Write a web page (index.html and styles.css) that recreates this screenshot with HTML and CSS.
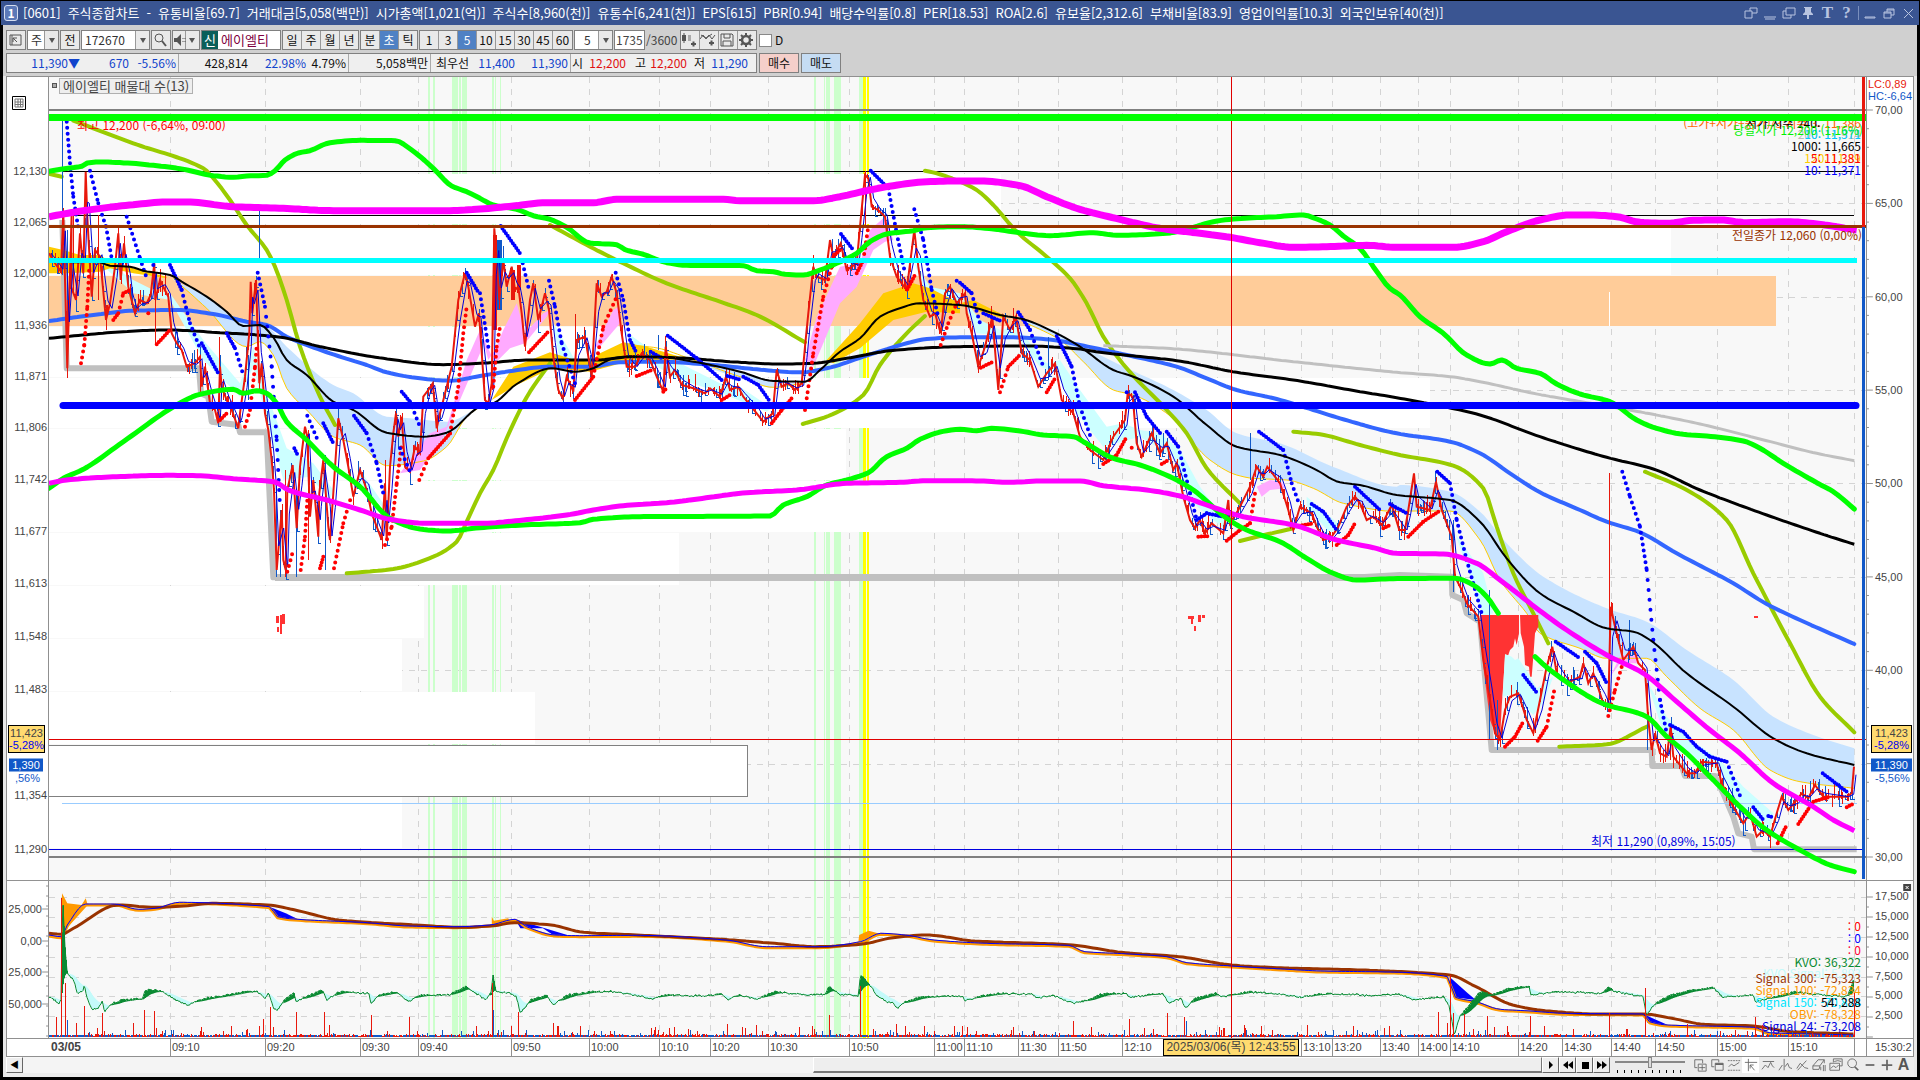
FILE: index.html
```html
<!DOCTYPE html>
<html lang="ko">
<head>
<meta charset="utf-8">
<title>[0601] 주식종합차트</title>
<link rel="stylesheet" href="styles.css">
</head>
<body>
<header class="titlebar">
  <span class="badge">1</span>
  <h1 class="metrics"><span>[0601]</span><span>주식종합차트</span><span>-</span><span>유통비율[69.7]</span><span>거래대금[5,058(백만)]</span><span>시가총액[1,021(억)]</span><span>주식수[8,960(천)]</span><span>유통수[6,241(천)]</span><span>EPS[615]</span><span>PBR[0.94]</span><span>배당수익률[0.8]</span><span>PER[18.53]</span><span>ROA[2.6]</span><span>유보율[2,312.6]</span><span>부채비율[83.9]</span><span>영업이익률[10.3]</span><span>외국인보유[40(천)]</span></h1>
  <div class="wintools">
    <button aria-label="창 분리"><svg viewBox="0 0 14 14"><path d="M1 5h7v7H1zM6 5V2h7v5H8"/></svg></button>
    <button aria-label="숨기기"><svg viewBox="0 0 14 14"><path d="M1 11h12M2 13h10"/></svg></button>
    <button aria-label="복제"><svg viewBox="0 0 14 14"><path d="M4 2h9v7H4zM4 5H1v7h8V9"/></svg></button>
    <button aria-label="고정"><svg viewBox="0 0 14 14"><path class="f" d="M3 1h8v1h-1v4l2 2v1H8v4H6V9H2V8l2-2V2H3z"/></svg></button>
    <button aria-label="글꼴" class="serif">T</button>
    <button aria-label="도움말" class="serif">?</button>
    <i class="bar"></i>
    <button aria-label="최소화"><svg viewBox="0 0 14 14"><path d="M2 11h10v1H2z"/></svg></button>
    <button aria-label="이전 크기"><svg viewBox="0 0 14 14"><path d="M2 6h7v6H2zM5 6V3h7v6H9M2 7h7M5 4h7"/></svg></button>
    <button aria-label="닫기"><svg viewBox="0 0 14 14"><path d="M3 3l9 9M12 3l-9 9"/></svg></button>
  </div>
</header>
<main class="window">
  <section class="tools">
    <div class="row">
      <div class="group"><button aria-label="패널"><svg viewBox="0 0 16 16"><path d="M3 3h11v10H3zM5 3v10M10 6H6v4M10 10L6 6"/></svg></button></div>
      <div class="drop w31"><select aria-label="종목 구분"><option>주</option></select></div>
      <div class="group"><button>전</button></div>
      <div class="drop w67"><input type="text" aria-label="종목코드" value="172670"></div>
      <div class="group"><button aria-label="검색"><svg viewBox="0 0 16 16"><circle cx="7" cy="6" r="4"/><path d="M10 9l4 5" stroke-width="2"/></svg></button></div>
      <div class="group"><button aria-label="소리" class="w14"><svg viewBox="0 0 16 16"><path class="f" d="M1 6h3l4-4v12l-4-4H1z"/><path d="M10 6v4M12 6v4" stroke-dasharray="1 2"/></svg></button><button aria-label="소리 메뉴" class="w14 arrow"></button></div>
      <div class="stock"><b>신</b><span>에이엘티</span></div>
      <div class="group"><button>일</button><button>주</button><button>월</button><button>년</button></div>
      <div class="group"><button>분</button><button class="on">초</button><button>틱</button></div>
      <div class="group num"><button>1</button><button>3</button><button class="on">5</button><button>10</button><button>15</button><button>30</button><button>45</button><button>60</button></div>
      <div class="drop w39"><input type="text" class="mid" aria-label="주기" value="5"></div>
      <div class="count"><input type="text" aria-label="표시 개수" value="1735"><span>/3600</span></div>
      <div class="group icons">
        <button aria-label="차트 유형"><svg viewBox="0 0 16 16"><path class="f" d="M1 3h4v6H1zM3 1v10M10 11h5v2h-5zM11.500 9.500h2v5h-2z"/><path d="M3 1v10"/><path class="g" d="M7 3h3v6H7z"/></svg></button>
        <button aria-label="지표 추가"><svg viewBox="0 0 16 16"><path d="M0 7l3-4 3 4 3-4 3 4 3-4M1 3l5 3 6-4"/><path class="f" d="M9 10h5v2H9zM10.500 8.500h2v5h-2z"/></svg></button>
        <button aria-label="저장"><svg viewBox="0 0 16 16"><path d="M2 2h11l1 1v11H2zM5 2v4h6V2M4 14V9h8v5"/></svg></button>
        <button aria-label="설정"><svg viewBox="0 0 16 16"><circle cx="8" cy="8" r="4" stroke-width="2.500"/><path d="M8 1v3M8 12v3M1 8h3M12 8h3M3 3l2 2M11 11l2 2M13 3l-2 2M5 11l-2 2" stroke-width="2"/></svg></button>
      </div>
      <label class="check"><input type="checkbox">D</label>
    </div>
    <div class="row">
      <div class="quote">
        <span class="dn">11,390▼</span><span class="dn">670</span><span class="dn sep">-5.56%</span>
        <span>428,814</span><span class="dn">22.98%</span><span class="sep">4.79%</span><span class="sep">5,058백만</span>
        <span>최우선</span><span class="dn">11,400</span><span class="dn sep">11,390</span>
        <span>시</span><span class="up">12,200</span><span>고</span><span class="up">12,200</span><span>저</span><span class="dn">11,290</span>
      </div>
      <button class="buy">매수</button>
      <button class="sell">매도</button>
    </div>
  </section>
  <section class="chart" aria-label="주식종합차트">
    <div class="axis left" id="left">
      <svg class="gridicon" viewBox="0 0 14 14"><path d="M.5.5h13v13H.5z" stroke="#000"/><path d="M3 3h8v8H3zM3 6h8M3 8.500h8M6 3v8M8.500 3v8" stroke="#777"/></svg>
    </div>
    <div class="plot" id="plot">
      <span class="mark"></span><span class="legend">에이엘티 매물대 수(13)</span>
    </div>
    <div class="axis right" id="right"></div>
    <div class="times start"></div>
    <div class="times" id="times"></div>
    <div class="times end">15:30:2</div>
  </section>
  <footer class="scroll">
    <button class="step" aria-label="왼쪽으로">◀</button>
    <div class="track"><div class="thumb"></div></div>
    <div class="play"><button aria-label="재생"><svg viewBox="0 0 12 12"><path d="M4 2v8l4-4z"/></svg></button><button aria-label="뒤로"><svg viewBox="0 0 12 12"><path d="M6 2v8L1 6zM11 2v8L6 6z"/></svg></button><button aria-label="정지"><svg viewBox="0 0 12 12"><path d="M3 3h7v7H3z"/></svg></button><button aria-label="앞으로"><svg viewBox="0 0 12 12"><path d="M1 2v8l5-4zM6 2v8l5-4z"/></svg></button></div>
    <input class="slider" type="range" aria-label="재생 속도">
    <div class="draw">
      <button aria-label="추가"><svg viewBox="0 0 16 16"><path d="M11 6V2H2v9h3M6 7h9v8H6zM10.500 8v6M7 11h7"/></svg></button>
      <button aria-label="겹치기"><svg viewBox="0 0 16 16"><path d="M10 5V2H2v8h3M6 6h9v8H6z"/><path class="f" d="M6 6h9v2H6z"/></svg></button>
      <button aria-label="구간"><svg viewBox="0 0 16 16"><path d="M1 3h14M1 14h14" stroke-dasharray="2 1"/><path d="M2 10l3-3 3 2 3-2 3-2"/></svg></button>
      <button aria-label="십자선" class="down"><svg viewBox="0 0 16 16"><path d="M1 5h14M5 1v14M12 14L7 8M7 12V8h4"/></svg></button>
      <button aria-label="수평선"><svg viewBox="0 0 16 16"><path d="M2 4h13M1 13l4-5 3 3 3-6 2 4 2 2"/></svg></button>
      <button aria-label="수직선"><svg viewBox="0 0 16 16"><path d="M7 1v13M1 14l4-6M8 10l3-4 2 5 3 1"/></svg></button>
      <button aria-label="추세선"><svg viewBox="0 0 16 16"><path d="M3 14L13 3M2 12l4-6 5 5 4 1" /></svg></button>
      <button aria-label="모두 지우기"><svg viewBox="0 0 16 16"><path d="M1 9l6-7h7l-5 7zM1 9v4h7l1-4M14 2v4M10 14v-4M13 8v7M15 8v7"/></svg></button>
      <button aria-label="이미지"><svg viewBox="0 0 16 16"><path d="M5 5V1h10v8h-3M1 6h11v8H1zM2 12l3-3 3 2 3-3M6 4l4-1 4 1"/></svg></button>
      <button aria-label="확대"><svg viewBox="0 0 16 16"><circle cx="7" cy="6" r="5"/><path d="M10 10l4 4" stroke-width="2"/></svg></button>
      <button aria-label="축소"><svg viewBox="0 0 16 16"><path d="M3 8h10" stroke-width="2"/></svg></button>
      <button aria-label="늘리기"><svg viewBox="0 0 16 16"><path d="M2 8h12M8 2v12" stroke-width="2"/></svg></button>
      <button aria-label="글자" class="letter">A</button>
    </div>
  </footer>
</main>
<script src="chart.js"></script>
</body>
</html>
```
FILE: styles.css
```css
* { box-sizing: border-box; }
body {
  margin: 0; padding: 1px 3px 3px; min-height: 100vh; background: #000;
  display: flex; flex-direction: column; color: #111;
  font: 12px/18px "Noto Sans CJK KR", sans-serif;
}
button, input, select { font: inherit; color: inherit; margin: 0; padding: 0; border: 0; border-radius: 0; background: none; }
svg { display: block; fill: none; stroke: #555; }
svg .f { fill: #555; stroke: none; }
svg .g { fill: #aaa; stroke: none; }

.titlebar { display: flex; align-items: center; height: 24px; margin: 0 -2px; padding: 0 3px; gap: 5px; background: #3a5592; color: #fff; }
.badge { width: 14px; height: 16px; line-height: 14px; border: 1px solid #d5def0; border-radius: 3px; background: #5b79b8; text-align: center; font-weight: bold; }
.metrics { flex: 1; display: flex; gap: 7px; margin: 0; font-size: 13px; line-height: 22px; font-weight: normal; white-space: nowrap; }
.wintools { display: flex; align-items: center; gap: 4px; }
.wintools button { width: 15px; height: 16px; color: #b8c4e0; }
.wintools svg { width: 14px; height: 14px; stroke: #b8c4e0; }
.wintools svg .f { fill: #b8c4e0; }
.wintools .serif { font: bold 17px/16px "Liberation Serif", serif; }
.wintools .bar { width: 1px; height: 14px; background: #7a8fbd; }

.window { flex: 1; display: flex; flex-direction: column; background: #e8e8e8; }
.tools { display: flex; flex-direction: column; gap: 3px; padding: 5px 3px 3px; background: #d0d0d0; }
.row { display: flex; gap: 1px; height: 20px; }
.group, .drop, .stock, .count input { display: flex; border: 1px solid #808080; background: #e9e9e9; }
.group button { width: 19px; border-right: 1px solid #999; }
.group button:last-child { border-right: 0; width: 18px; }
.group button.w14 { width: 13px; }
.group svg { width: 16px; height: 16px; }
.group.num button, .icons button { width: 19px; }
.group .on { background: #4f81c4; color: #fff; }
.drop { position: relative; background: #fff; }
.drop::after, .arrow::after { content: ""; border: 3px solid transparent; border-top: 5px solid #555; border-bottom: 0; margin: 7px 3px 0; }
.drop::before { content: ""; position: absolute; right: 0; top: 0; bottom: 0; width: 13px; background: #e9e9e9; border-left: 1px solid #999; }
.drop::after { position: absolute; right: 0; }
.arrow { display: flex; }
.drop select, .drop input { flex: 1; width: 10px; padding-left: 3px; appearance: none; color: #333; }
.drop .mid { padding-left: 9px; }
.w31 { width: 32px; } .w67 { width: 69px; } .w39 { width: 39px; }
.stock { width: 80px; background: #fff; color: #800040; font-size: 13px; gap: 3px; }
.stock b { width: 16px; background: #0a5f5a; color: #fff; font-weight: normal; text-align: center; }
.count { display: flex; width: 65px; gap: 1px; line-height: 20px; color: #444; }
.count input { width: 31px; background: #fff; padding-left: 1px; }
.check { display: flex; align-items: center; gap: 3px; padding-left: 1px; }
.check input { appearance: none; width: 13px; height: 13px; border: 1px solid #888; background: #fff; }
.quote {
  display: grid; grid-template-columns: 73px 49px 50px 69px 58px 43px 82px 38px 46px 56px 12px 43px 20px 41px 18px 43px;
  width: 751px; border: 1px solid #808080; background: #efefef; text-align: right;
}
.quote .sep { border-right: 1px solid #aaa; padding-right: 2px; }
.dn { color: #1144cc; } .up { color: #e01010; }
.buy, .sell { width: 40px; margin-left: 1px; border: 1px solid #808080; background: #f5cfca; }
.sell { background: #c5dcf3; }

.chart {
  flex: 1; display: grid; grid-template: 1fr 18px / 42px 1fr 47px; margin: 0 3px;
  border: 1px solid #909090; background: #fff; color: #444;
}
.axis, .plot, .times { position: relative; overflow: hidden; min-width: 0; min-height: 0; }
.axis, .times { font: 11px/14px "Liberation Sans", "Noto Sans CJK KR", sans-serif; }
.plot { background: #f8f8f8; }
.plot > svg, .axis > svg.ticks { position: absolute; inset: 0; width: 100%; height: 100%; }
.left { border-right: 1px solid #909090; }
.right { border-left: 1px solid #909090; }
.gridicon { position: absolute; left: 5px; top: 19px; width: 14px; height: 14px; }
.lab { position: absolute; white-space: nowrap; line-height: 14px; transform: translateY(-50%); }
.left .lab { right: 1px; }
.left .sub { right: 6px; }
.right .lab { left: 8px; }
.right .edge { left: 1px; }
.plot .r { right: 5px; }
.lab.box { border: 1px solid #000; background: #ffdb70; line-height: 12px; padding: 1px 0; text-align: center; }
.left .box { left: 1px; right: 3px; }
.right .box { left: 4px; right: 1px; }
.lab.box em { display: block; font-style: normal; color: #0000f0; }
.left .now, .right .now { background: #1158c8; color: #fff; line-height: 13px; text-align: center; }
.left .now { left: 2px; right: 5px; }
.right .now { left: 4px; right: 1px; }
.lab.nowp { color: #1158c8; right: 8px; }
.mark { position: absolute; z-index: 1; left: 3px; top: 6px; width: 5px; height: 5px; border: 1px solid #555; background: #aaa; }
.legend { position: absolute; z-index: 1; left: 10px; top: 1px; padding: 0 3px; font-size: 13px; line-height: 14px; border: 1px solid #b0b0b0; background: #eee; }
.times { border-top: 1px solid #909090; }
.times.end { border-left: 1px solid #909090; padding-left: 8px; line-height: 16px; }
.times span { position: absolute; top: 0; height: 17px; line-height: 16px; padding-left: 1px; border-left: 1px solid #909090; }
.times .day { font-size: 12px; font-weight: bold; border-left: 0; }
.times .cursor { background: #ffdb70; border: 1px solid #000; z-index: 1; padding: 0; width: 136px; white-space: nowrap; font-size: 12px; line-height: 15px; text-align: center; }

.scroll { display: flex; height: 20px; margin: 0 3px; padding-bottom: 4px; background: #ececec; }
.step, .play button { width: 17px; background: #eee; border: 1px solid #999; border-color: #fff #666 #666 #fff; font-size: 9px; line-height: 12px; color: #000; }
.track { flex: 1; display: flex; justify-content: flex-end; background: #f4f4f4; }
.thumb { width: 48%; background: #eee; border: 1px solid #fff; border-right-color: #777; border-bottom: 2px solid #777; }
.play { display: flex; }
.play svg { width: 12px; height: 12px; margin: 0 auto; fill: #000; stroke: none; }
.slider {
  appearance: none; width: 70px; margin: 0 6px 0 5px; height: 16px;
  background: repeating-linear-gradient(90deg, #000 0 1px, transparent 1px 7px) 2px 100% / 100% 3px no-repeat, linear-gradient(#888, #888) 0 4px / 100% 2px no-repeat;
}
.slider::-webkit-slider-thumb { appearance: none; width: 4px; height: 11px; margin-top: -5px; background: #ddd; border: 1px solid #888; }
.draw { display: flex; width: 223px; }
.draw button { width: 17px; color: #555; }
.draw .down { background: #fff; }
.draw svg { width: 14px; height: 14px; margin: 0 auto; stroke: #666; }
.draw svg .f { fill: #666; }
.draw .letter { font: bold 16px/14px "Liberation Sans", sans-serif; }
```
FILE: chart.js
```js
/* Chart canvas: x 49..1866, y 77..1038. */
const X0 = 49, Y0 = 77, W = 1817, H = 961;

/* Series are stored in tiles: origin x, origin y, units per pixel in x and in y. */
const TILES = {
  A: [0, 100, 3, 3], B: [480, 100, 3, 3], C: [960, 100, 3, 3], D: [1400, 400, 3, 3], E: [1400, 100, 3, 3],
  F: [0, 680, 2.45, 3], G: [640, 860, 2.45, 3], H: [1280, 860, 2.45, 3]
};
/* "A 1,2 3,4 B 5,6" -> [[x, y], ...] */
function pts(s) {
  let t = null; const out = [];
  for (const w of s.trim().split(/\s+/)) {
    if (TILES[w]) { t = TILES[w]; continue; }
    const [x, y] = w.split(',').map(Number);
    out.push([t[0] + x / t[2], t[1] + y / t[3]]);
  }
  return out;
}
const str = p => p.map(q => q[0].toFixed(1) + ',' + q[1].toFixed(1)).join(' ');
/* monotone cubic, resampled to points; falls back to the raw points when x does not advance */
function smooth(p) {
  if (p.length < 3 || p.some((q, i) => i && q[0] <= p[i - 1][0])) return p;
  const n = p.length, s = [], m = [];
  for (let i = 0; i < n - 1; i++) s.push((p[i + 1][1] - p[i][1]) / (p[i + 1][0] - p[i][0]));
  for (let i = 0; i < n; i++) {
    if (!i) m.push(s[0]); else if (i === n - 1) m.push(s[n - 2]);
    else if (s[i - 1] * s[i] <= 0) m.push(0);
    else m.push(2 * s[i - 1] * s[i] / (s[i - 1] + s[i]));
  }
  const out = [p[0]];
  for (let i = 0; i < n - 1; i++) {
    const h = p[i + 1][0] - p[i][0], k = Math.max(1, Math.round(h / 4));
    for (let j = 1; j <= k; j++) {
      const t = j / k, u = 1 - t;
      out.push([p[i][0] + h * t, (1 + 2 * t) * u * u * p[i][1] + t * u * u * h * m[i] + t * t * (3 - 2 * t) * p[i + 1][1] - t * t * u * h * m[i + 1]]);
    }
  }
  return out;
}
let body = '';
const line = (s, c, w, extra = '') => s.split('|').forEach(k => {
  body += `<polyline points="${str(smooth(pts(k)))}" stroke="${c}" stroke-width="${w}" stroke-linejoin="round" ${extra}/>`;
});
const area = (s, c) => s.split('|').forEach(k => { body += `<polygon points="${str(pts(k))}" fill="${c}" stroke="none"/>`; });
const rect = (x, y, x2, y2, c) => { body += `<rect x="${x}" y="${y}" width="${x2 - x}" height="${y2 - y}" fill="${c}" stroke="none" shape-rendering="crispEdges"/>`; };
const dots = (s, c) => s.trim().split(/\s*\n\s*/).forEach(row => {
  const t = row[0];
  row.slice(2).split(';').forEach(k => {
    const p = pts(t + ' ' + k.trim());
    if (p.length === 1) p.push([p[0][0] + 1, p[0][1]]);
    for (let i = 1; i < p.length; i++) {
      const [a, b] = p[i - 1], [d, e] = p[i], L = Math.hypot(d - a, e - b), steep = Math.abs(e - b) > 2.2 * Math.abs(d - a);
      body += `<path d="M${a.toFixed(1)} ${b.toFixed(1)}L${d.toFixed(1)} ${e.toFixed(1)}" stroke="${c}" stroke-width="4" stroke-linecap="round" stroke-dasharray="0 ${steep && L > 60 ? 10 : steep && L > 15 ? 6 : 3}"/>`;
    }
  });
});
let seed = 7;
const rnd = () => (seed = (seed * 16807) % 2147483647) / 2147483647;

/* grid */
const VX = [170, 265, 360, 418, 511, 589, 659, 710, 768, 849, 934, 964, 1018, 1058, 1122, 1176, 1217, 1264, 1301, 1332, 1380, 1418, 1450, 1518, 1562, 1611, 1655, 1717, 1788, 1854];
const dash = 'stroke="#d4d4d4" stroke-dasharray="6 6" shape-rendering="crispEdges"';
VX.forEach(x => { body += `<path d="M${x + .5} 77V1038" ${dash}/>`; });
[203, 297, 390, 483, 577, 670, 764, 897, 917, 937, 957, 977, 996, 1016].forEach(y => { body += `<path d="M49 ${y + .5}H1866" ${dash}/>`; });
[[428, 430], [433, 435], [452, 458], [459, 461], [462, 467], [492, 494], [495, 496], [500, 501], [814, 816], [824, 825], [826, 830], [834, 841], [859, 863]].forEach(b => rect(b[0], 77, b[1], 1038, '#ccffcc'));
rect(863, 77, 866, 1038, '#ffff00'); rect(867, 77, 869, 1038, '#ffff00');

/* volume profile */
[[174, 224, 1001], [225, 275, 1671], [327, 377, 805], [378, 428, 1430], [429, 480, 846], [481, 532, 1162], [533, 585, 679], [586, 638, 424], [639, 691, 402], [692, 744, 535], [797, 848, 402]].forEach(r => rect(49, r[0], r[2], r[1], '#ffffff'));
rect(49, 276, 1776, 326, '#ffcc99');
rect(49, 745, 748, 797, '#808080'); rect(49, 746, 747, 796, '#ffffff');
rect(1609, 292, 1610, 326, '#ffffff');

/* stop trail */
line('A 187,360 200,805 597,805 603,880 625,890 635,965 715,975 720,997 800,997 820,1432 C 1200,1432 D 0,525 155,530 157,585 190,600 200,640 240,665 275,1050 755,1050 757,1098 845,1098 855,1128 945,1128 945,1130 970,1180 1000,1250 1015,1300 1055,1310 1062,1348 1370,1348', '#c0c0c0', 6);
body += '<path d="M275 577.5H1400" stroke="#c0c0c0" stroke-width="7"/>';

/* bands */
const bandLowA = 'A 520,535 620,625 740,740 780,725 820,765 860,865 925,935 1000,1010 1080,1035 1160,1097 1270,1083 1340,1040 1400,950 1440,920';
const bandLowC = 'C 190,665 300,720 370,785 460,870 520,885 640,955 700,1030 750,1080 830,1125 880,1135 980,1140 1060,1165 1150,1210 1320,1235 D 10,333 150,333 240,420 300,540 380,640 420,700 540,745 620,775 740,775 800,830 900,925 1000,990 1110,1110 1200,1145 1363,1165';
const band = (up, low) => { body += `<polygon points="${str(smooth(pts(up)).concat(smooth(pts(low)).reverse()))}" fill="#c8e3ff" stroke="none"/>`; };
band('A 520,540 620,590 730,665 800,680 860,740 1000,855 1060,880 1160,950 1230,955 1340,965 1440,920', bandLowA);
band('C 190,655 300,705 480,795 640,870 740,930 830,1000 960,1030 1130,1105 1310,1160 D 0,255 150,275 240,335 320,430 430,530 620,625 740,665 860,750 1000,840 1120,950 1240,1005 1363,1045', bandLowC);
area('B 530,775 700,790 880,845 970,850 870,865 780,835 640,790', '#c8e3ff');
area('A 150,440 180,470 185,490 150,480|A 300,490 340,500 400,540 460,570 510,580 610,720 720,850 760,740 800,880 860,1045 940,1090 1000,1170 990,1200 930,1130 850,1140 800,960 760,800 720,890 610,780 510,600 400,580|A 1080,1110 1170,1240 1150,1225 1070,1140|B 215,660 285,780 280,820 240,780|B 430,690 500,740 600,790 720,850 780,860 875,925 860,935 700,870 600,840 480,770|B 1300,480 1350,560 1440,580 1440,620 1380,620 1330,560|C 0,580 60,660 120,690 170,680 260,790 300,780 360,870 440,980 490,970 540,990 600,1000 660,1050 720,1160 800,1270 790,1285 700,1210 640,1070 540,1010 430,1040 350,940 290,820 240,800 170,710 50,700|C 1040,1190 1140,1275 1110,1300 1040,1220|D 165,400 250,520 280,640 250,650 200,500|D 740,840 800,950 860,1010 960,1080 1030,1160 1120,1240 1110,1290 1030,1230 960,1120 860,1060 790,1000', '#ccffff');
area('A 147,440 190,450 240,465 300,465 330,485 400,505 500,530 500,535 400,520 330,505 300,515 200,520 147,520|B 35,900 100,800 210,757 285,780 330,785 360,760 430,727 500,740 600,770 600,778 440,785 330,815 215,805 110,855|B 1040,780 1140,670 1210,580 1300,550 1350,565 1440,610 1440,640 1340,635 1240,660 1140,745 1060,790|C 0,610 40,600 130,645 130,655 60,635', '#ffcc00');
area('A 1200,1120 1290,1000 1340,980 1400,780 1440,690 1440,760 1380,900 1330,1010 1260,1110|B 0,690 25,780 45,750 70,690 110,610 135,700 190,640 210,630 200,650 135,730 90,745 45,790|B 345,740 400,630 415,620 420,670 360,740|B 975,780 1010,650 1080,500 1140,490 1170,390 1215,350 1240,420 1215,425 1180,450 1130,560 1080,610 1030,730 1000,800|C 890,1160 930,1140 965,1145 975,1165 930,1170 905,1190|D 630,830 660,770 700,760 720,790 660,790', '#ffaaff');
line(bandLowA + '|' + bandLowC + '|B 440,735 520,742 640,780 780,830 880,862 965,850', '#ffcc00', 1);

/* horizontal levels */
body += '<g shape-rendering="crispEdges"><path d="M49 110H1866" stroke="#808080" stroke-width="2"/><path d="M63 171.500H1854M64 215.500H1854" stroke="#000"/><path d="M49 857H1866" stroke="#808080" stroke-width="2"/><path d="M62 803.500H1857" stroke="#99ccff"/><path d="M49 849.500H1862" stroke="#0000e0"/></g>';

/* averages */
line('A 150,222 185,230|A 220,62 400,130 610,205 640,235 690,300 740,375 800,450 825,500 860,600 900,740 960,890 1005,975|A 1040,1420 1180,1407 1300,1370 1370,1325 1400,1265 1440,1180 B 40,1110 80,1015 130,910 150,875 210,790|B 210,375 330,440 440,495 560,550 720,605 830,645 975,727|B 968,972 1045,948 1150,885 1200,795 1280,700 1335,648|B 1335,212 1370,220 1440,245 C 50,270 100,315 170,395 260,470 330,535 380,610 430,710 500,805 620,930 680,1000 740,1105 840,1210|C 840,1323 900,1308 1000,1285|C 1000,995 1080,1003 1200,1035 1310,1063 D 160,197 250,265 290,380 340,520 400,640 445,730|D 478,1040 620,1033 740,980|D 735,215 860,270 980,360 1060,520 1170,730 1260,890 1363,997', '#99cc00', 4, 'stroke-linecap="round"');
line('C 430,737 620,745 1000,785 1310,817 E 150,830 240,845 400,880 560,908 700,932 D 900,72 1100,122 1250,160 1363,182', '#c0c0c0', 3);
line('A 147,663 280,645 400,632 530,630 640,642 740,665 800,675 860,710 990,760 1100,795 1160,817 1260,835 1350,842 1440,828 B 100,812 210,800 330,800 420,787 530,785 700,795 830,808 960,817 1040,805 1150,770 1280,730 1340,717 1440,712 C 160,712 280,720 360,735 500,765 650,800 740,835 830,870 950,897 1060,930 1140,955 1310,1000 D 150,125 240,160 330,220 420,277 540,330 620,365 720,397 830,460 1000,550 1100,612 1200,660 1363,732', '#3366ff', 4, 'stroke-linecap="round"');
line('A 147,715 260,704 370,695 500,690 660,698 830,710 970,742 1150,775 1330,794 1440,790 B 150,780 350,780 460,770 620,775 750,785 900,792 1000,790 1100,775 1250,750 1440,740 C 200,738 350,746 420,757 650,782 830,817 1000,840 1200,875 1310,893 D 165,27 240,45 420,110 620,172 760,207 900,270 1100,345 1260,400 1363,433', '#000', 3);

/* price */
const price = pts('A 147,460 165,490 183,515 190,340 202,805 215,335 213,560 228,600 240,400 250,520 257,215 262,350 275,590 285,450 300,470 318,660 330,610 345,500 355,400 362,540 372,430 385,560 392,590 405,640 420,600 440,610 452,585 463,490 466,600 480,540 490,560 505,590 515,700 530,730 545,750 560,800 585,790 600,770 605,860 615,800 630,910 645,930 655,970 660,800 665,860 680,900 695,930 715,985 720,940 735,830 748,700 752,545 757,640 768,540 778,850 785,790 795,940 805,990 815,1080 822,1170 830,1410 845,1230 850,1380 857,1410 862,1170 878,1095 890,1285 900,1100 915,980 922,1010 930,1250 940,1140 955,1310 958,1180 970,1080 985,1280 990,1320 1000,1180 1015,955 1030,1020 1045,1100 1060,1190 1080,1110 1100,1170 1115,1240 1130,1280 1145,1320 1155,1150 1160,1320 1170,1100 1180,1000 1188,940 1195,1010 1205,950 1215,1100 1230,1115 1245,1040 1260,1060 1270,890 1285,870 1298,850 1305,920 1310,985 1320,940 1340,860 1355,800 1375,600 1395,520 1405,560 1425,680 1437,640 B 15,900 25,910 35,850 43,385 50,480 58,600 70,480 80,560 95,500 105,570 115,560 125,640 135,740 150,600 160,550 175,660 195,580 207,630 220,770 235,870 248,895 260,830 280,875 290,720 315,710 335,830 350,550 365,590 380,575 395,530 410,580 425,700 440,800 465,800 485,760 510,780 530,830 550,875 557,740 570,830 585,810 605,855 640,865 675,880 690,865 720,890 738,830 750,870 775,860 790,890 830,940 850,965 878,940 890,810 905,860 925,850 945,870 965,850 975,740 985,640 1000,500 1010,530 1035,540 1050,420 1060,470 1082,430 1100,510 1130,490 1140,380 1155,225 1165,235 1175,320 1195,330 1215,350 1230,470 1250,530 1280,570 1303,390 1315,500 1330,600 1350,650 1365,640 1382,700 1395,580 1410,560 1430,610 C 15,580 20,640 35,700 55,800 75,740 97,650 115,870 130,650 150,690 168,650 185,760 210,780 235,860 260,820 285,790 305,900 340,940 360,1010 390,1050 410,1065 430,1080 460,1010 495,960 503,880 518,890 530,1030 545,1070 575,1000 600,1060 620,1030 640,1110 650,1090 670,1190 690,1260 705,1285 720,1260 735,1300 755,1270 790,1300 805,1200 810,1270 835,1230 870,1160 890,1100 910,1130 922,1100 960,1150 985,1230 1000,1290 1020,1220 1055,1240 1070,1280 1090,1320 1115,1310 1135,1280 1160,1220 1185,1190 1200,1210 1220,1260 1240,1250 1265,1275 1295,1215 1318,1290 D 15,390 25,330 42,220 50,320 90,330 108,245 125,330 155,410 165,530 185,570 200,610 235,650 250,780 270,900 285,1000 300,1020 315,930 330,890 355,880 380,960 400,1000 420,900 440,800 457,740 470,820 500,850 540,830 550,790 565,850 580,820 610,910 625,920 632,620 645,680 670,780 700,740 715,790 735,810 745,960 755,1050 765,1000 780,1060 800,1070 812,980 820,1070 860,1120 885,1120 905,1085 950,1090 965,1150 1000,1220 1030,1270 1050,1240 1070,1310 1090,1290 1110,1310 1130,1240 1145,1190 1165,1230 1190,1200 1205,1180 1225,1195 1245,1155 1270,1190 1340,1190 1355,1180 1362,1100');
area('D 240,645 357,645 357,700 350,735 345,715 340,740 330,750 325,765 315,770 310,850 305,920 300,1020 285,1000 270,960 250,800|D 360,645 415,645 415,680 405,700 400,770 395,830 390,830 387,800 375,795 372,740 362,700', '#ff3333');
area('D 315,762 335,770 345,780 355,775 365,790 385,820 410,865 460,830 430,910 400,945 375,920 350,880 308,890', '#ccffff');
let red = '', blue = '';
for (let i = 1; i < price.length; i++) {
  const [a, b] = price[i - 1], [d, e] = price[i], n = Math.max(1, Math.round((d - a) / 1.5));
  for (let k = 0; k < n; k++) {
    if (rnd() < .25) continue;
    const x = Math.round(a + (d - a) * k / n) + .5, y = b + (e - b) * k / n, r = 2 + rnd() * rnd() * 16;
    const s = `M${x} ${(y - r).toFixed(0)}v${(r + 2 + rnd() * rnd() * 12).toFixed(0)}`;
    if (rnd() < .5) red += s; else blue += s + 'h2';
  }
}
body += `<g shape-rendering="crispEdges"><path d="${blue}" stroke="#1158c8"/>
<path d="M62.500 120V275M67.500 230V345M259.500 205V260M325.500 455V570M248.500 355V400M276.500 480V577M280.500 510V577M296.500 490V577M658.500 335V350M1048.500 337V380M1250.500 433V480M1453.500 520V592M1489.500 590V740M1497.500 700V750M1647.500 690V750M1629.500 620V660" stroke="#1158c8"/>
<path d="M67.500 300V368M73.500 211V290M155.500 275V344M200.500 370V393M219.500 337V410M98.500 215V300M285.500 470V577M308.500 430V560M385.500 460V520M575.500 314V370M665.500 336V375M865.500 171V225M1609.500 473V700M1670.500 724V760" stroke="#e8180c"/>
<path d="M499 240V310" stroke="#1158c8" stroke-width="6"/><path d="M495 235V330M513 270V300M519 265V290" stroke="#e8180c" stroke-width="4"/></g>`;
body += `<polyline points="${str(price)}" stroke="#e8180c" stroke-width="2"/><g shape-rendering="crispEdges"><path d="${red}" stroke="#e8180c"/></g>`;
const lag = price.map((p, i) => { const q = price[Math.max(0, i - 1)]; return [p[0] + 2, p[1] * .7 + q[1] * .3]; });
body += `<polyline points="${str(lag)}" stroke="#0000d8" stroke-width="1"/>`;

const dBlue = `A 200,65 210,190 220,290 235,385;270,212 295,310 318,380 335,475;380,350 420,475 440,535;460,495;510,495 545,570 570,670 600,745;605,730 655,820;680,700 705,745 727,815;773,518 795,620 815,800 830,1020 840,1220;883,1045 893,1065;922,947 957,1030;970,970 1000,1030;1062,947 1100,1000 1130,1090 1152,1190;1205,875 1230,905 1258,975;1200,1045 1230,1115;1400,518 1437,580
B 0,580 25,740;62,378 120,460;128,490 145,560;207,542 225,620 245,730 285,850;407,518 430,600 450,720 470,760;512,755 545,775;563,707 650,775 725,840;742,828 785,840;790,830 835,855 870,905;1172,212 1225,265 1250,400 1275,520;1083,402 1120,450;1303,328 1330,420 1355,570 1375,650;1430,542
C 0,548 35,580 60,670;70,640 120,662;175,637 210,690 250,800;290,708 335,800 360,920 395,1020;500,877;525,877 560,950 605,1005;620,995 655,1040 690,1180 710,1260 740,1240 790,1250;897,995 970,1050 995,1150 1015,1205;1055,1212 1090,1235 1130,1290;1185,1160 1260,1230;1290,1212 1340,1240
D 112,215 150,250 170,360 200,480 245,640;370,825 412,880;467,725 540,775;555,755 590,790 620,850;667,215 690,290 720,380 740,510 760,720 780,900 800,1000;810,975 850,995 890,1040 930,1070 980,1085 1025,1200;1060,1222 1090,1260;1105,1248 1120,1252;1268,1120 1340,1175`;
const dRed = `A 243,790 253,735 262,620 268,500;340,660 355,640 370,580 390,570;470,733 510,690;660,960 685,935;735,980 750,930 765,800 770,740;862,1415 880,1350;902,1410 915,1310 922,1200;960,1405 970,1370;1002,1405 1030,1270 1055,1185;1155,1335 1175,1280 1190,1150 1205,1030;1258,1140 1285,1075 1350,1000 1375,860 1390,700 1400,620;445,640
B 40,860 50,740 60,680;147,757 205,695;285,900 340,830 370,680 410,590;470,828 515,810;550,875 560,865;725,900 750,885;875,970 905,930 935,895;975,930 1000,760 1030,590 1055,500;1060,470 1085,445;1130,520 1150,480 1165,380;1282,568 1305,525;1382,735 1405,670 1430,610
C 62,803 100,785;120,877 145,800 180,765;260,877 285,835;430,1092 470,1065 500,1010;515,1043;605,1092 625,1080;715,1310 750,1308;800,1322 840,1290 870,1270 885,1180;1000,1280 1060,1270;1130,1335 1165,1305 1185,1270;1270,1285 1290,1275
D 25,410 70,365 115,335;315,1040 345,1010 370,965;413,1022 440,980 465,860;543,877;625,948 645,870 665,800;1133,1330 1160,1275;1195,1272 1240,1205 1290,1190;1340,1222 1362,1210`;
dots(dRed, '#ff0000'); dots(dBlue, '#0000ff');

line('A 147,483 235,487 265,483 300,487 330,497 390,500 430,512 510,525 545,545 620,590 680,635 730,678 780,675 820,712 860,780 920,825 1000,905 1060,930 1160,998 1270,1010 1340,998 1440,920 B 40,910 110,852 215,805 285,815 330,808 400,775 440,770 530,770 640,785 780,815 880,843 975,845 1020,810 1080,755 1140,715 1200,650 1250,628 1320,610 1440,615 C 50,625 120,645 190,658 290,700 360,740 460,810 520,830 640,890 740,975 830,1040 960,1065 1060,1105 1140,1147 1200,1155 1310,1185 D 150,300 240,365 320,475 420,580 520,635 620,685 700,695 750,720 860,820 1000,920 1120,1015 1220,1060 1363,1095', '#000', 2);
line('A 147,214 187,207 245,199 262,189 300,186 395,190 460,196 540,206 640,227 700,232 740,228 800,226 825,212 855,180 895,159 930,152 990,128 1080,121 1185,122 1235,150 1300,205 1355,258 1400,275 1440,295 B 40,315 110,328 160,347 210,358 260,382 330,429 410,434 435,449 490,463 560,488 620,496 790,497 830,512 880,515 915,523 970,525 1020,510 1070,490 1130,460 1170,425 1220,402 1300,392 1340,383 1440,380 C 100,387 170,397 270,407 400,398 470,406 620,400 700,382 760,365 820,357 950,350 1030,345 1070,357 1110,375 1150,408 1200,445 1240,500 1290,565 E 0,585 60,650 130,700 200,765 270,792 305,780 350,805 420,820 470,852 540,882 630,905 D 710,60 770,85 850,103 920,108 1030,123 1080,145 1150,190 1250,248 1300,275 1363,327|A 147,1165 190,1135 250,1108 370,1025 530,915 600,883 700,868 730,880 770,872 800,880 830,910 860,965 920,1020 1000,1100 1080,1160 1170,1255 1260,1287 1340,1293 1440,1283 B 130,1275 300,1268 340,1258 480,1250 870,1248 910,1215 980,1190 1040,1155 1100,1140 1165,1118 1220,1070 1280,1045 1320,1018 1400,992 1440,988 C 50,992 95,985 180,993 250,1005 340,1010 370,1025 460,1075 540,1095 640,1135 700,1170 800,1255 860,1290 960,1325 1040,1375 1120,1420 1190,1440 1300,1436 D 100,535 165,535 220,555 260,590 295,640|D 405,770 450,810 620,915 700,935 740,950 800,1010 860,1060 930,1130 1020,1220 1100,1290 1200,1350 1290,1395 1363,1415', '#00ff00', 5, 'stroke-linecap="round"');
line('A 147,350 250,332 400,314 500,306 560,306 700,320 850,325 1000,332 1350,332 1440,327 B 100,318 200,308 340,308 410,298 730,298 780,302 1000,302 1080,290 1160,272 1240,257 1340,245 1440,243 C 60,243 180,257 260,290 360,328 480,358 600,385 720,400 810,412 900,428 1000,442 1100,440 1220,436 1310,442 E 160,442 250,425 320,395 420,360 510,345 570,345 650,350 720,367 800,370 880,361 960,360 1040,368 1160,365 1250,372 1370,390', '#ff00ff', 7);
line('A 147,1150 200,1140 350,1130 510,1126 590,1127 700,1136 820,1145 870,1172 980,1200 1080,1230 1170,1258 1280,1270 1440,1270 B 130,1260 260,1245 340,1230 430,1217 560,1208 690,1192 800,1178 950,1170 1100,1150 1260,1147 1340,1142 1440,1142 C 60,1143 150,1147 240,1143 360,1143 430,1157 560,1170 660,1188 740,1215 850,1250 1000,1275 1130,1320 1240,1343 1310,1360 D 130,462 230,490 300,540 430,640 500,690 620,765 730,820 830,905 930,990 1020,1060 1120,1150 1240,1220 1300,1260 1363,1292', '#ff00ff', 5);
body += '<path d="M63 405.500H1856" stroke="#0000ff" stroke-width="7" stroke-linecap="round"/><path d="M49 260.500H1857" stroke="#00ffff" stroke-width="5"/><path d="M49 226.500H1866" stroke="#993300" stroke-width="3"/>';
rect(276, 616, 279, 623, '#ff3333'); rect(280, 615, 282, 634, '#ff3333'); rect(282, 614, 285, 624, '#ff3333'); rect(277, 627, 279, 632, '#ff3333');
rect(1188, 616, 1194, 619, '#ff3333'); rect(1191, 619, 1193, 624, '#ff3333'); rect(1194, 626, 1196, 631, '#ff3333'); rect(1198, 615, 1201, 622, '#ff3333'); rect(1202, 615, 1205, 618, '#ff3333');
rect(1754, 616, 1758, 618, '#ff3333');

/* lower pane */
const at = (p, x) => { let i = 1; while (i < p.length - 1 && p[i][0] < x) i++; const [a, b] = p[i - 1], [d, e] = p[i]; return b + (e - b) * Math.min(1, Math.max(0, (x - a) / (d - a || 1))); };
const obv = 'F 120,765 150,770 165,735 210,672 280,672 340,688 380,685 440,667 660,680 680,710 730,718 900,728 1000,738 1120,740 1200,735 1262,718 1290,740 1360,765 1420,767 1560,766 G 210,240 310,260 440,260 540,245 590,220 650,225 720,240 850,250 1050,256 1090,275 1200,282 1290,290 1340,308 1450,318 1560,326 H 100,333 300,337 410,350 430,412 480,425 540,448 600,452 700,460 890,462 905,485 950,495 1160,502 1200,518 1405,525';
area('F 150,770 152,640 165,670 200,675 210,655 215,675 160,750|G 535,245 537,225 560,212 590,222 560,235|F 1205,710 1210,722 1245,715 1250,725 1205,735', '#ff9900');
area('F 660,680 700,700 730,718 680,712|F 1262,718 1390,765 1355,765 1330,745 1275,745|H 415,350 460,400 480,420 425,412|H 895,465 950,495 900,488', '#0000ff');
body += `<g transform="translate(0 1)">`; line(obv, '#ff9900', 3); body += '</g>';
line('F 120,760 150,763 180,745 290,675 380,682 460,677 520,670 655,675 730,692 830,720 1020,735 1130,742 1210,737 1260,728 1350,735 1430,757 1560,765 G 200,238 330,250 430,260 540,253 620,233 700,225 820,243 1050,254 1180,277 1320,290 1450,315 1560,323 H 200,330 415,345 480,380 570,435 650,452 780,462 890,462 960,475 1040,493 1160,498 1250,515 1405,522', '#993300', 3);
line(obv, '#0000ff', 1);
const kvo = pts('F 120,950 145,970 150,960 153,640 160,820 165,880 180,900 190,940 203,935 206,915 215,960 225,990 240,985 250,965 257,995 275,970 300,960 350,955 355,930 378,930 400,935 430,960 460,975 500,955 560,945 600,935 630,935 650,955 658,935 670,985 680,990 700,955 720,940 726,965 750,950 790,930 800,960 830,935 905,940 908,970 930,945 970,935 1000,965 1030,945 1100,945 1140,920 1160,935 1190,960 1204,935 1207,880 1215,935 1250,940 1265,950 1275,1000 1300,960 1340,945 1355,975 1390,945 1450,935 1500,935 1568,948 G 30,418 60,405 150,408 200,402 215,420 240,405 285,418 330,395 400,405 455,402 462,378 490,403 535,408 540,345 560,370 580,405 605,425 620,430 630,445 650,425 690,410 790,408 795,422 830,410 880,400 960,403 975,415 1010,405 1060,430 1100,420 1130,402 1190,400 1200,412 1280,400 1295,430 1325,415 1337,445 1360,415 1410,400 1430,410 1490,395 1568,403 H 50,412 100,402 170,402 220,408 290,402 330,420 400,410 415,440 427,525 440,470 490,395 520,405 560,385 610,380 615,405 680,395 790,400 805,380 820,395 890,410 897,465 920,430 950,408 1000,392 1060,382 1085,412 1160,405 1165,425 1200,415 1260,395 1300,402 1390,410 1405,360');
let ema = at(kvo, 49), up = '', down = '', run = '';
for (let x = 49; x < 1854; x++) {
  const y = at(kvo, x) + (rnd() - .5) * 2; ema += (y - ema) * .1;
  if (y < ema) up += `M${x}.5 ${y.toFixed(1)}V${ema.toFixed(1)}`; else down += `M${x}.5 ${ema.toFixed(1)}V${y.toFixed(1)}`;
  run += `${x},${y.toFixed(1)} `;
}
body += `<path d="${down}" stroke="#c4fafa"/><path d="${up}" stroke="#0a8a32"/><polyline points="${run}" stroke="#0a8a32" stroke-width="1"/>`;
let vr = '', vb = '';
for (let x = 49; x < 1855; x++) {
  const h = rnd() < .12 ? 3 + rnd() * 9 : 1 + rnd() * 2;
  if (rnd() < .5) vr += `M${x}.5 1037v-${h.toFixed(0)}`; else vb += `M${x}.5 1037v-${(h / 2 + 1).toFixed(0)}`;
}
pts('F 136,1010 150,655 160,910 185,1030 205,978 251,1000 325,1030 354,990 378,993 645,1018 662,980 724,996 795,996 908,1005 1001,1010 1205,910 1268,995 1355,1028 G 28,503 70,503 212,492 250,500 285,495 390,502 422,498 462,465 538,378 627,492 697,497 790,497 1062,483 1197,476 1292,458 1334,472 1430,503 H 180,498 388,455 410,490 416,345 425,460 450,462 506,468 613,468 805,458 895,383 998,492 1163,472 1180,495 1407,400').forEach(p => { vr += `M${Math.round(p[0])}.5 1037V${p[1].toFixed(0)}`; });
pts('F 163,1020 1209,990 G 214,508 1337,483').forEach(p => { vb += `M${Math.round(p[0])}.5 1037V${p[1].toFixed(0)}`; });
body += `<g shape-rendering="crispEdges"><path d="${vb}" stroke="#1158c8"/><path d="${vr}" stroke="#e8180c"/><path d="M49 880.500H1866" stroke="#909090"/><path d="M1231.500 77V1038" stroke="#e00000"/><path d="M49 739.500H1866" stroke="#e00000"/></g>`;

const NS = 'viewBox="49 77 1817 961" preserveAspectRatio="none"';
const plot = document.getElementById('plot'), left = document.getElementById('left'), right = document.getElementById('right'), times = document.getElementById('times');
plot.insertAdjacentHTML('beforeend', `<svg ${NS}>${body}</svg>`);

const top_ = y => ((y - Y0) / H * 100).toFixed(3) + '%', left_ = x => ((x - X0) / W * 100).toFixed(3) + '%';
const label = (box, y, text, cls = '', color = '', x = null) => box.insertAdjacentHTML('beforeend', `<span class="lab ${cls}" style="top:${top_(y)};${color ? 'color:' + color + ';' : ''}${x ? 'left:' + left_(x) : ''}">${text}</span>`);

label(plot, 125, '최고 12,200 (-6,64%, 09:00)', '', '#ff0000', 77);
label(plot, 841, '최저 11,290 (0,89%, 15:05)', '', '#0000e0', 1591);
[[123, '(고가+저가+종가)/3 지수 3: 11,386', '#ff6600'], [123, '저가 지수 240:', '#000', 1746], [134, '200: 11,914', '#bbbbbb'], [134, '10: 11,371', '#00ccff'], [130, '당일시가 12,200 (1,16%)', '#00f000', 1733], [146, '1000: 11,665', '#000'], [158, '120: 11,39', '#ffcc00'], [158, '5: 11,381', '#ff0000'], [170, '10: 11,371', '#0000ff'], [235, '전일종가 12,060 (0,00%)', '#993300', 1732],
 [926, ': 0', '#ff0000'], [938, ': 0', '#0000ff'], [950, ': 0', '#ff0033'], [962, 'KVO: 36,322', '#0a8a32'], [973, 'KVO Signal: 5,893', '#c4fafa'], [978, 'Signal 300: -75,323', '#993300'], [990, 'Signal 100: -72,834', '#ff9900'], [1002, 'Signal 150: -70,824', '#00e5ff'], [1002, '54: 288', '#000'], [1014, 'OBV: -78,328', '#ff9900'], [1026, 'Signal 24: -73,208', '#0000e0']
].forEach(l => label(plot, l[0], l[1], l[3] ? '' : 'r', l[2], l[3]));
plot.insertAdjacentHTML('beforeend', `<svg ${NS}><g shape-rendering="crispEdges"><path d="M49 117.500H1866" stroke="#00ff00" stroke-width="7"/><path d="M1863.500 77V227" stroke="#e8180c" stroke-width="3"/><path d="M1863.500 227V879" stroke="#1158c8" stroke-width="3"/></g></svg>`);

[[171, '12,130'], [222, '12,065'], [273, '12,000'], [325, '11,936'], [376, '11,871'], [427, '11,806'], [479, '11,742'], [531, '11,677'], [583, '11,613'], [636, '11,548'], [689, '11,483'], [795, '11,354'], [849, '11,290'], [909, '25,000'], [941, '0,00'], [972, '25,000'], [1004, '50,000']].forEach(l => label(left, l[0], l[1], l[0] > 880 ? 'sub' : ''));
[[110, '70,00'], [203, '65,00'], [297, '60,00'], [390, '55,00'], [483, '50,00'], [577, '45,00'], [670, '40,00'], [857, '30,00'], [896, '17,500'], [916, '15,000'], [936, '12,500'], [956, '10,000'], [976, '7,500'], [995, '5,000'], [1015, '2,500']].forEach(l => label(right, l[0], l[1]));
label(right, 84, 'LC:0,89', 'edge', '#e8180c'); label(right, 96, 'HC:-6,64', 'edge', '#1158c8');
[left, right].forEach(b => label(b, 739, '11,423<em>-5,28%</em>', 'box'));
label(left, 765, '1,390', 'now'); label(left, 778, ',56%', 'nowp'); label(right, 765, '11,390', 'now'); label(right, 778, '-5,56%', 'nowp');

let tr = '', tl = '';
for (let i = 0; i <= 40; i++) tr += `M0 ${(110 + i * 18.675).toFixed(1)}h${i % 5 ? 2 : 6}`;
for (let i = 0; i <= 14; i++) tr += `M0 ${897 + i * 10}h${i % 2 ? 2 : 6}`;
for (let i = 0; i <= 15; i++) tl += `M42 ${886 + i * 10}h-2`;
tl += 'M42 909h-6M42 941h-6M42 972h-6M42 1004h-6';
right.insertAdjacentHTML('afterbegin', `<svg class="ticks" viewBox="0 77 47 961" preserveAspectRatio="none" stroke="#909090"><path stroke="#909090" d="${tr}"/><path stroke="#909090" d="M0 880.500h47"/><path d="M37 884h8v7h-8z" fill="#444" stroke="none"/><path d="M39.500 886l3 3M42.500 886l-3 3" stroke="#fff"/></svg>`);
left.insertAdjacentHTML('afterbegin', `<svg class="ticks" viewBox="0 77 42 961" preserveAspectRatio="none"><path stroke="#909090" d="${tl}"/><path stroke="#909090" d="M0 880.500h42"/></svg>`);

const time = (x, t, cls = '') => times.insertAdjacentHTML('beforeend', `<span class="${cls}" style="left:${left_(x)}">${t}</span>`);
time(50, '03/05', 'day');
'170 09:10,265 09:20,360 09:30,418 09:40,511 09:50,589 10:00,659 10:10,710 10:20,768 10:30,849 10:50,934 11:00,964 11:10,1018 11:30,1058 11:50,1122 12:10,1301 13:10,1332 13:20,1380 13:40,1418 14:00,1450 14:10,1518 14:20,1562 14:30,1611 14:40,1655 14:50,1717 15:00,1788 15:10'.split(',').forEach(k => { const [x, t] = k.split(' '); time(+x, t); });
time(1163, '2025/03/06(목) 12:43:55', 'cursor');
time(1854, '');
```
